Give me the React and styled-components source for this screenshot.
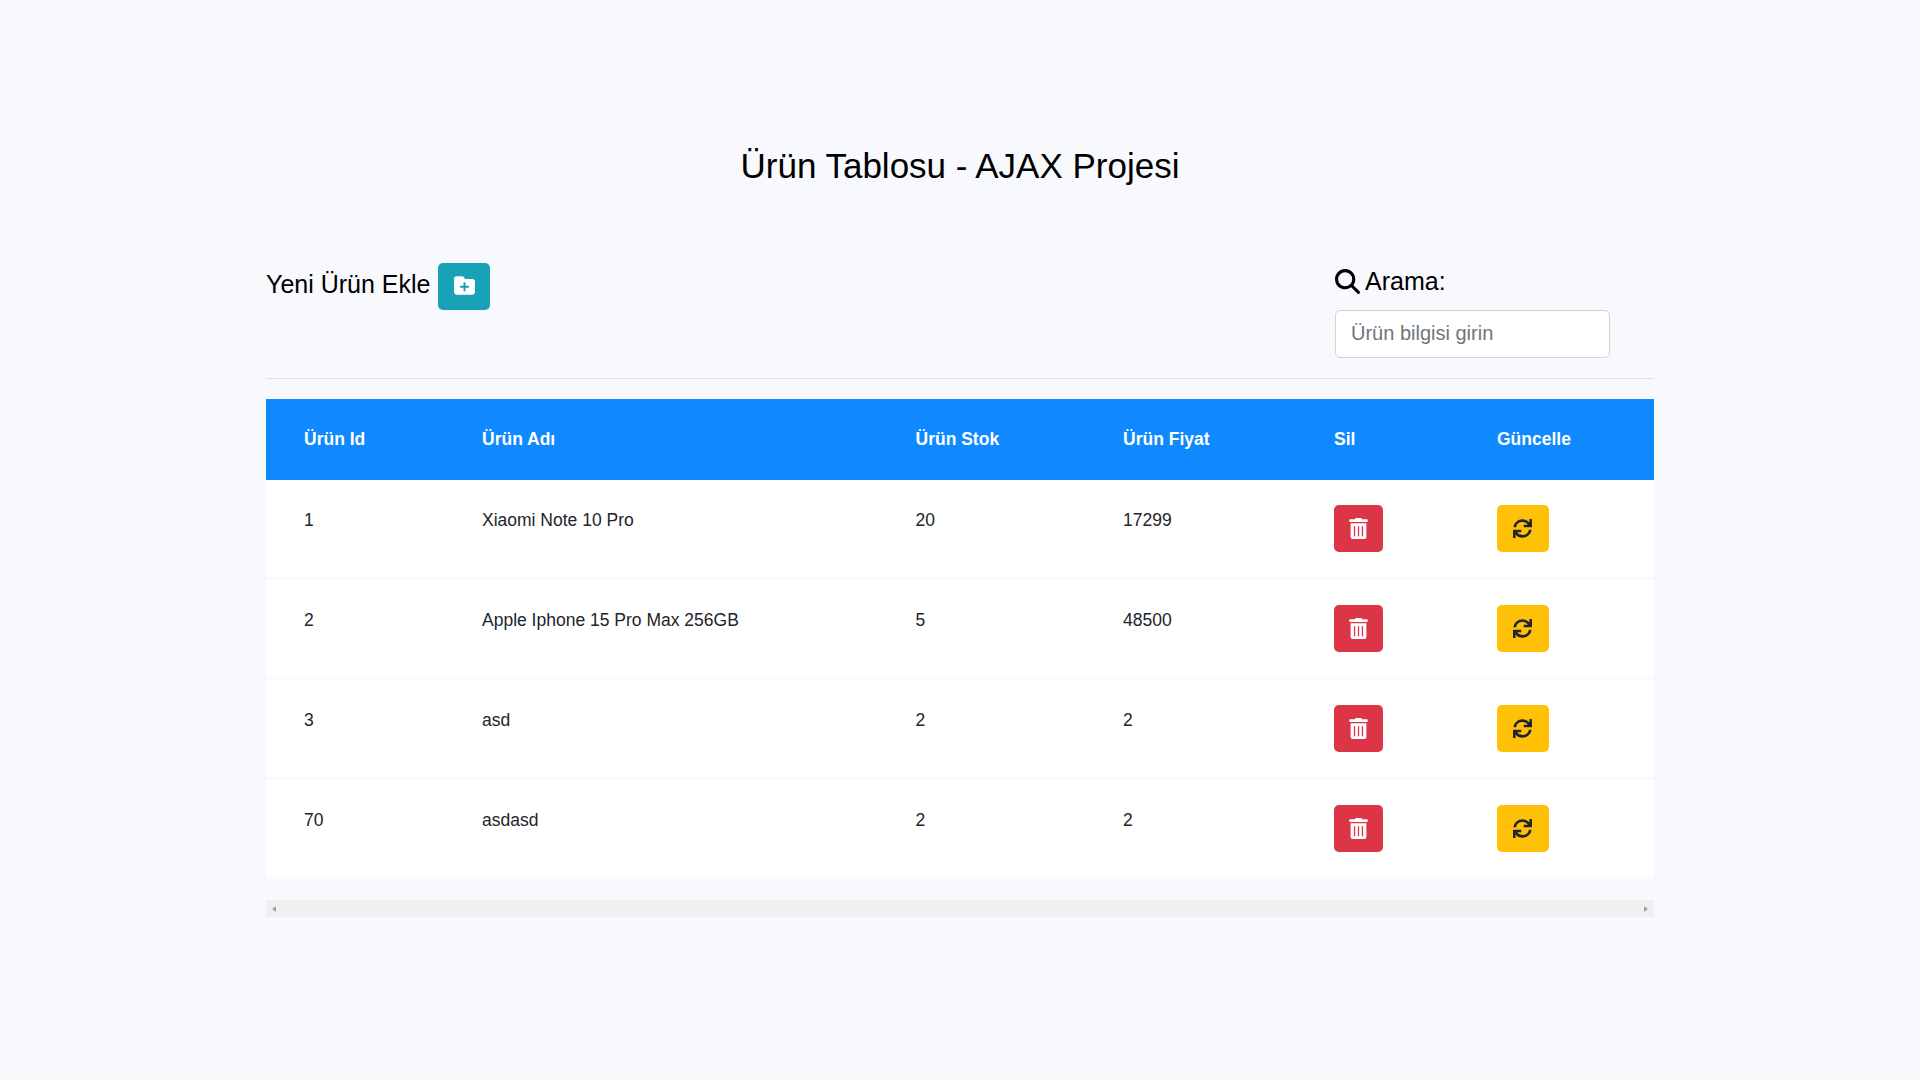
import React from "react";
import styled, { createGlobalStyle } from "styled-components";
import { FaFolderPlus, FaMagnifyingGlass } from "react-icons/fa6";
import { FaSync, FaTrashAlt } from "react-icons/fa";

const Global = createGlobalStyle`
  html, body { margin: 0; padding: 0; background: #f8f9fd; }
  body { font-family: "Liberation Sans", Arial, sans-serif; color: #000; }
`;

const Page = styled.div`
  width: 1388px;
  margin: 0 auto;
  padding-top: 145px;
`;
const Title = styled.h1`
  margin: 0;
  text-align: center;
  font-size: 35px;
  line-height: 42px;
  font-weight: 400;
`;
const Toolbar = styled.div`
  display: flex;
  justify-content: space-between;
  align-items: flex-start;
  margin-top: 76px;
  padding-bottom: 20px;
  border-bottom: 1px solid #dee2e6;
`;
const AddGroup = styled.div`
  display: flex;
  align-items: flex-start;
  gap: 8px;
`;
const AddLabel = styled.span`
  font-size: 25px;
  line-height: 30px;
  margin-top: 6px;
`;
const IconButton = styled.button`
  width: ${(p) => p.$w}px;
  height: 47px;
  padding: ${(p) => p.$pad || "0"};
  border: 0;
  border-radius: 5px;
  background: ${(p) => p.$bg};
  color: ${(p) => p.$fg};
  font-size: ${(p) => p.$size}px;
  display: flex;
  align-items: center;
  justify-content: center;
`;
const SearchGroup = styled.div`
  width: 275px;
  margin-right: 44px;
  margin-top: 4px;
`;
const SearchLabel = styled.label`
  display: flex;
  align-items: center;
  gap: 5px;
  font-size: 25px;
  line-height: 29px;
  margin-bottom: 14px;
`;
const SearchInput = styled.input`
  display: block;
  width: 100%;
  height: 48px;
  box-sizing: border-box;
  padding: 0 15px 2px;
  border: 1px solid #ced4da;
  border-radius: 5px;
  background: #fff;
  font: 20px "Liberation Sans", Arial, sans-serif;
  &::placeholder { color: #6c757d; opacity: 1; }
`;
const Table = styled.table`
  width: 1388px;
  margin-top: 20px;
  border-collapse: collapse;
  table-layout: fixed;
  font-size: 17.5px;
  line-height: 30px;
`;
const HeadCell = styled.th`
  height: 81px;
  padding: 0 0 2px 38px;
  box-sizing: border-box;
  background: #1089ff;
  color: #fff;
  font-weight: 700;
  text-align: left;
`;
const Row = styled.tr`
  background: #fff;
  border-bottom: 3px solid #f8f9fd;
  &:last-child { border-bottom: 0; }
`;
const Cell = styled.td`
  padding: 25px 0 25px 38px;
  vertical-align: top;
  color: #212529;
`;
const ScrollTrack = styled.div`
  height: 17px;
  margin-top: 23px;
  padding: 0 6px;
  background: #f0f0f0;
  display: flex;
  align-items: center;
  justify-content: space-between;
`;
const Arrow = styled.span`
  width: 0;
  height: 0;
  border-top: 3.5px solid transparent;
  border-bottom: 3.5px solid transparent;
  ${(p) => (p.$right ? "border-left: 4px solid #a3a3a3;" : "border-right: 4px solid #a3a3a3;")}
`;

const widths = [178, 433.5, 207.5, 211, 163, 195];
const heads = ["Ürün Id", "Ürün Adı", "Ürün Stok", "Ürün Fiyat", "Sil", "Güncelle"];
const rows = [
  [1, "Xiaomi Note 10 Pro", 20, 17299],
  [2, "Apple Iphone 15 Pro Max 256GB", 5, 48500],
  [3, "asd", 2, 2],
  [70, "asdasd", 2, 2],
];

export default function App() {
  return (
    <Page>
      <Global />
      <Title>Ürün Tablosu - AJAX Projesi</Title>
      <Toolbar>
        <AddGroup>
          <AddLabel>Yeni Ürün Ekle</AddLabel>
          <IconButton $w={52} $size={21} $pad="0 0 2px" $bg="#17a2b8" $fg="#fff"><FaFolderPlus /></IconButton>
        </AddGroup>
        <SearchGroup>
          <SearchLabel><FaMagnifyingGlass size={25} />Arama:</SearchLabel>
          <SearchInput placeholder="Ürün bilgisi girin" />
        </SearchGroup>
      </Toolbar>
      <Table>
        <colgroup>{widths.map((w, i) => <col key={i} style={{ width: w }} />)}</colgroup>
        <thead>
          <tr>{heads.map((h) => <HeadCell key={h}>{h}</HeadCell>)}</tr>
        </thead>
        <tbody>
          {rows.map((r) => (
            <Row key={r[0]}>
              {r.map((v, i) => <Cell key={i}>{v}</Cell>)}
              <Cell><IconButton $w={49} $size={21} $pad="0 0 1px" $bg="#dc3545" $fg="#fff"><FaTrashAlt /></IconButton></Cell>
              <Cell><IconButton $w={52} $size={19} $pad="0 1px 0 0" $bg="#ffc107" $fg="#212529"><FaSync /></IconButton></Cell>
            </Row>
          ))}
        </tbody>
      </Table>
      <ScrollTrack>
        <Arrow />
        <Arrow $right />
      </ScrollTrack>
    </Page>
  );
}
